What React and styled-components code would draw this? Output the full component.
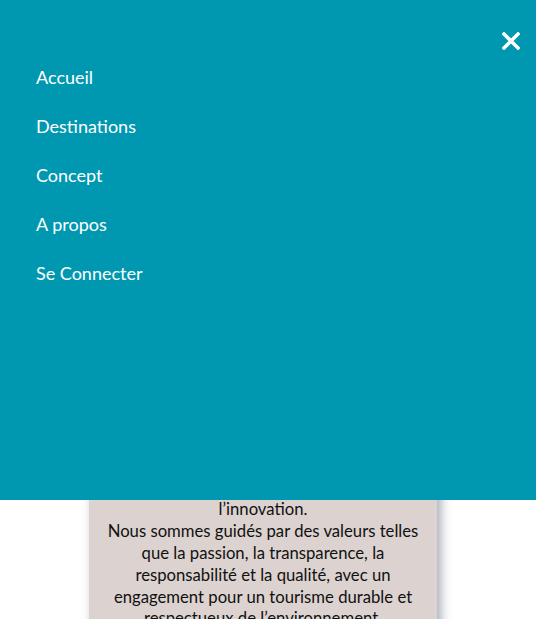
import React from "react";
import styled, { createGlobalStyle } from "styled-components";

const Global = createGlobalStyle`
  html, body { margin: 0; padding: 0; background: #ffffff; }
  body { font-family: Lato, "Open Sans", sans-serif; overflow: hidden; }
`;

const Page = styled.main`
  display: flex;
  justify-content: center;
  padding-top: 414px;
`;

const Card = styled.section`
  width: 348px;
  box-sizing: border-box;
  margin-left: -10px;
  padding: 20px 10px 60px;
  background: #dcd2cf;
  box-shadow: 4px 4px 10px rgba(60, 70, 100, 0.45);
  color: #111;
  font-size: 16.7px;
  line-height: 21.8px;
  text-align: center;
`;

const Para = styled.p`
  margin: 0;
`;

const Overlay = styled.nav`
  position: fixed;
  top: 0;
  left: 0;
  right: 0;
  height: 500px;
  background: #0098b0;
  box-sizing: border-box;
  padding: 65px 36px 0;
`;

const Close = styled.button`
  position: absolute;
  top: 31px;
  right: 15px;
  width: 20px;
  height: 20px;
  padding: 0;
  border: 0;
  background: none;
  cursor: pointer;
  display: flex;
  align-items: center;
  justify-content: center;
`;

const Menu = styled.ul`
  list-style: none;
  margin: 0;
  padding: 0;
  display: flex;
  flex-direction: column;
  gap: 25px;
`;

const Item = styled.li`
  color: #ffffff;
  font-size: 18px;
  line-height: 24px;
`;

export default function App() {
  const items = ["Accueil", "Destinations", "Concept", "A propos", "Se Connecter"];
  return (
    <>
      <Global />
      <Page>
        <Card>
          <Para>
            Notre agence de voyage est née d'une passion commune pour la découverte
            du monde, l'authenticité, le confort et<br />
            l’innovation.
          </Para>
          <Para>
            Nous sommes guidés par des valeurs telles que la passion, la transparence,
            la responsabilité et la qualité, avec un engagement pour un tourisme
            durable et respectueux de l’environnement.
          </Para>
        </Card>
      </Page>
      <Overlay>
        <Close aria-label="Fermer">
          <svg width="18" height="18" viewBox="0 0 18 18">
            <path d="M2 2 L16 16 M16 2 L2 16" stroke="#fff" strokeWidth="3.4" strokeLinecap="square" />
          </svg>
        </Close>
        <Menu>
          {items.map((t) => (
            <Item key={t}>{t}</Item>
          ))}
        </Menu>
      </Overlay>
    </>
  );
}
